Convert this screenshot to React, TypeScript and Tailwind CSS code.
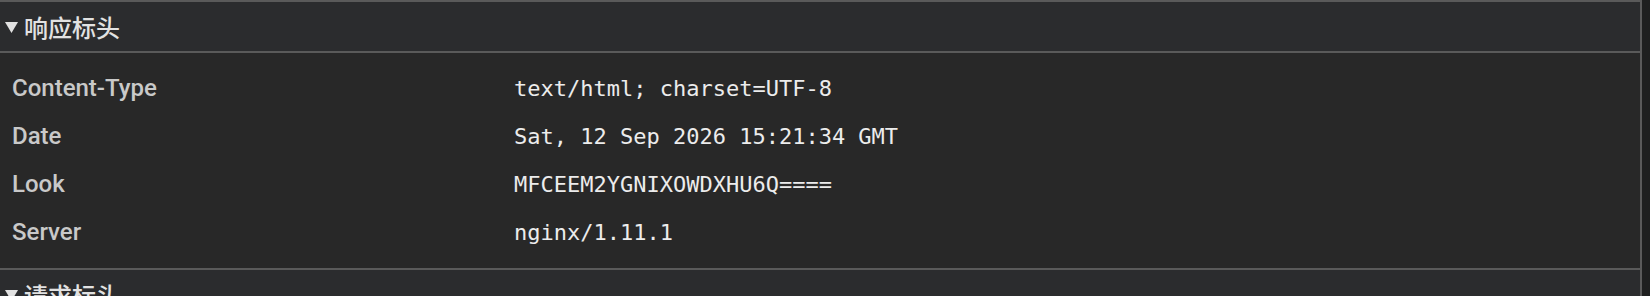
const headers: [string, string][] = [
  ['Content-Type', 'text/html; charset=UTF-8'],
  ['Date', 'Sat, 12 Sep 2026 15:21:34 GMT'],
  ['Look', 'MFCEEM2YGNIXOWDXHU6Q===='],
  ['Server', 'nginx/1.11.1'],
]

function SectionTitle({ title }: { title: string }) {
  return (
    <div className="flex h-[49px] shrink-0 items-center bg-[#2b2c2e] pl-[5px] text-[24px] font-medium text-[#e2e2e2] [font-family:'Noto_Sans_CJK_SC',sans-serif]">
      <svg width="13" height="11" viewBox="0 0 13 11" className="mr-[6px] mt-[2px]">
        <polygon points="0,0 13,0 6.5,11" fill="#e2e2e2" />
      </svg>
      <span className="leading-none">{title}</span>
    </div>
  )
}

export default function App() {
  return (
    <div className="flex h-[296px] w-[1650px] overflow-hidden bg-[#1e1f1f]">
      <div className="flex w-[1642px] flex-col border-t-2 border-r-2 border-[#5a5a5a] bg-[#282828]">
        <SectionTitle title="响应标头" />
        <div className="border-y-2 border-[#5a5a5a] pt-[11px] pb-[12px]">
          {headers.map(([name, value]) => (
            <div key={name} className="flex h-12 items-center">
              <div className="w-[514px] pl-3 text-[24px] font-medium text-[#c9c9c9] [font-family:Roboto,'Liberation_Sans',sans-serif]">
                {name}
              </div>
              <div className="text-[22px] text-[#ececec] [font-family:'DejaVu_Sans_Mono',monospace]">
                {value}
              </div>
            </div>
          ))}
        </div>
        <SectionTitle title="请求标头" />
      </div>
    </div>
  )
}
